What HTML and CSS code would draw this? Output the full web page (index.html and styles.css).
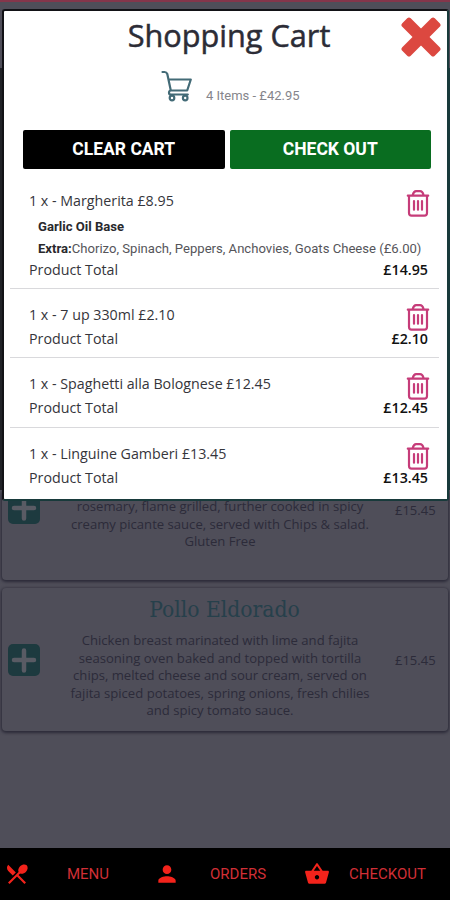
FILE: index.html
```html
<!DOCTYPE html>
<html lang="en">
<head>
    <meta charset="UTF-8">
    <meta name="viewport" content="width=device-width, initial-scale=1.0">
    <title>Shopping Cart</title>
    <link rel="stylesheet" href="styles.css">
</head>
<body>
    <svg width="0" height="0" class="icon-defs">
        <symbol id="trash" viewBox="0 0 24 28">
            <g fill="none" stroke="currentColor" stroke-width="2.2" stroke-linecap="round">
                <path d="M1.8 6.7h20.4M6.5 6.5C7.5 3.2 8.7 2.2 10 2.2h4c1.5 0 2.8 1 3.7 4.3M3 7v17a2.6 2.6 0 0 0 2.6 2.6h12.8a2.6 2.6 0 0 0 2.6-2.6v-17"/>
                <path d="M8 12v8.7M12 12v8.7M16 12v8.7"/>
            </g>
        </symbol>
        <symbol id="plus" viewBox="0 0 32 32">
            <rect width="32" height="32" rx="5" fill="#1d3a3f"/>
            <path d="M16 6.5v20M6 16h20" stroke="#595b64" stroke-width="4.5" stroke-linecap="round"/>
        </symbol>
    </svg>

    <div class="page">
        <div class="hero"></div>
        <div class="product first">
            <svg class="add"><use href="#plus"/></svg>
            <div class="details">
                <p>rosemary, flame grilled, further cooked in spicy<br>creamy picante sauce, served with Chips &amp; salad.<br>Gluten Free</p>
            </div>
            <span class="price">£15.45</span>
        </div>
        <div class="product">
            <svg class="add"><use href="#plus"/></svg>
            <div class="details">
                <h2>Pollo Eldorado</h2>
                <p>Chicken breast marinated with lime and fajita<br>seasoning oven baked and topped with tortilla<br>chips, melted cheese and sour cream, served on<br>fajita spiced potatoes, spring onions, fresh chilies<br>and spicy tomato sauce.</p>
            </div>
            <span class="price">£15.45</span>
        </div>
    </div>

    <!-- Cart popup -->
    <div class="cart">
        <svg class="close-btn" viewBox="0 0 40 40">
            <g fill="#dc4840" transform="rotate(45 20 20)">
                <rect x="-3" y="14" width="46" height="12" rx="2.5"/>
                <rect x="14" y="-3" width="12" height="46" rx="2.5"/>
            </g>
        </svg>
        <h1>Shopping Cart</h1>
        <div class="summary">
            <svg class="cart-icon" viewBox="0 0 32 32" fill="none" stroke="#436b77" stroke-width="2.2" stroke-linecap="round" stroke-linejoin="round">
                <path d="M1.5 2h2c1.6 0 2.3.7 2.8 2L9.8 20.5M7.8 9.5h22l-3.6 11H9.8c-2.4.4-2.4 4 0 4h17"/>
                <circle cx="11" cy="28" r="2.3"/>
                <circle cx="24.2" cy="28" r="2.3"/>
            </svg>
            <span>4 Items - £42.95</span>
        </div>
        <div class="actions">
            <button class="clear">CLEAR CART</button>
            <button class="checkout">CHECK OUT</button>
        </div>

        <div class="item">
            <div class="row name"><span>1 x - Margherita £8.95</span><svg class="trash"><use href="#trash"/></svg></div>
            <div class="option"><b>Garlic Oil Base</b></div>
            <div class="option extra"><b>Extra:</b>Chorizo, Spinach, Peppers, Anchovies, Goats Cheese (£6.00)</div>
            <div class="row total"><span>Product Total</span><span class="amount">£14.95</span></div>
        </div>
        <div class="item">
            <div class="row name"><span>1 x - 7 up 330ml £2.10</span><svg class="trash"><use href="#trash"/></svg></div>
            <div class="row total"><span>Product Total</span><span class="amount">£2.10</span></div>
        </div>
        <div class="item">
            <div class="row name"><span>1 x - Spaghetti alla Bolognese £12.45</span><svg class="trash"><use href="#trash"/></svg></div>
            <div class="row total"><span>Product Total</span><span class="amount">£12.45</span></div>
        </div>
        <div class="item">
            <div class="row name"><span>1 x - Linguine Gamberi £13.45</span><svg class="trash"><use href="#trash"/></svg></div>
            <div class="row total"><span>Product Total</span><span class="amount">£13.45</span></div>
        </div>
    </div>

    <nav>
        <a class="menu">
            <svg viewBox="0 0 24 24" fill="currentColor"><path d="M8.1 13.34l2.83-2.83L3.91 3.5a4.008 4.008 0 0 0 0 5.66l4.19 4.18zm6.78-1.81c1.53.71 3.68.21 5.27-1.38 1.91-1.91 2.28-4.65.81-6.12-1.46-1.46-4.2-1.1-6.12.81-1.59 1.59-2.09 3.74-1.38 5.27L3.7 19.87l1.41 1.41L12 14.41l6.88 6.88 1.41-1.41L13.41 13l1.47-1.47z"/></svg>
            <span>MENU</span>
        </a>
        <a class="orders">
            <svg viewBox="0 0 24 24" fill="currentColor"><path d="M12 12c2.21 0 4-1.79 4-4s-1.79-4-4-4-4 1.79-4 4 1.79 4 4 4zm0 2c-2.67 0-8 1.34-8 4v2h16v-2c0-2.66-5.33-4-8-4z"/></svg>
            <span>ORDERS</span>
        </a>
        <a class="pay">
            <svg viewBox="0 0 24 24" fill="currentColor"><path d="M17.21 9l-4.38-6.56a1 1 0 0 0-1.66.01L6.79 9H2c-.55 0-1 .45-1 1 0 .09.01.18.04.27l2.54 9.27c.23.84 1 1.46 1.92 1.46h13c.92 0 1.69-.62 1.93-1.46l2.54-9.27L23 10c0-.55-.45-1-1-1h-4.79zM9 9l3-4.4L15 9H9zm3 8c-1.1 0-2-.9-2-2s.9-2 2-2 2 .9 2 2-.9 2-2 2z"/></svg>
            <span>CHECKOUT</span>
        </a>
    </nav>
</body>
</html>
```

FILE: styles.css
```css
* {
    box-sizing: border-box;
}
body {
    margin: 0;
    height: 900px;
    display: flex;
    flex-direction: column;
    background-color: #4f4e59;
    font-family: "Open Sans", sans-serif;
    overflow: hidden;
}
h1, h2, p {
    margin: 0;
    font-weight: normal;
}
.icon-defs {
    position: absolute;
}
.page {
    flex: 1;
}

/* Menu behind the popup */
.hero {
    height: 490px;
    border-top: 2px solid #84364b;
    background: linear-gradient(#4f4e59 66px, transparent 66px), linear-gradient(90deg, #202126 50%, #183a3b 50%);
}
.product {
    display: grid;
    grid-template-columns: 62px 300px 1fr;
    align-items: center;
    height: 143px;
    margin: 0 2px;
    border-radius: 4px;
    color: #2c2b39;
    box-shadow: 0 1px 3px 1px #2b2a38;
    background-color: #4f4e59;
    margin-top: 8px;
    padding-left: 6px;
}
.product.first {
    height: 90px;
    margin-top: 0;
    padding-bottom: 51px;
}
.product.first .add {
    margin-top: -9px;
}
.add {
    width: 32px;
    height: 32px;
}
.details {
    text-align: center;
    white-space: nowrap;
}
.details h2 {
    font-family: "DejaVu Serif Condensed", "DejaVu Serif", serif;
    font-size: 22.6px;
    line-height: 28px;
    color: #26404b;
    padding-left: 9px;
    margin-bottom: 9px;
}
.details p {
    font-size: 13.1px;
    line-height: 17.5px;
    margin-bottom: 4px;
}
.product.first p {
    padding-top: 8px;
    margin-bottom: -15px;
}
.price {
    font-size: 13px;
    padding-left: 25px;
}
.product.first .price {
    margin-top: -6px;
}

/* Popup */
.cart {
    position: absolute;
    top: 9px;
    left: 2px;
    width: 447px;
    height: 492px;
    background-color: #fff;
    border: 2px solid #121216;
    border-right-color: #183a3b;
    border-bottom-color: #183a3b;
    border-radius: 3px;
    overflow: hidden;
    color: #35353b;
}
.close-btn {
    position: absolute;
    top: 6px;
    right: 6px;
    width: 40px;
    height: 40px;
}
.cart h1 {
    font-size: 30.7px;
    -webkit-text-stroke: 0.5px #2c2c36;
    line-height: 48px;
    text-align: center;
    color: #2c2c36;
    padding-left: 7px;
}
.summary {
    display: flex;
    height: 46px;
    margin-left: 157px;
    margin-top: 11px;
    font-family: Roboto, sans-serif;
    font-size: 13px;
    color: #85858b;
}
.cart-icon {
    width: 32px;
    height: 32px;
    margin-right: 13px;
}
.summary span {
    padding-top: 18px;
}
.actions {
    display: flex;
    gap: 5px;
    margin: 14px 16px 0 19px;
}
.actions button {
    flex: 1;
    height: 39px;
    padding: 0 0 2px;
    border: none;
    border-radius: 2px;
    color: white;
    font: bold 17.5px Roboto, sans-serif;
}
.clear {
    background-color: #000;
}
.checkout {
    background-color: #096d20;
}
.item {
    margin: 0 8px 0 6px;
    height: 69.5px;
    padding: 13px 11px 0 19px;
    border-bottom: 1px solid #d9d9dc;
    font-size: 14.25px;
    white-space: nowrap;
}
.actions + .item {
    height: 119.5px;
    padding-top: 19px;
}
.item:last-child {
    border-bottom: none;
}
.row {
    display: flex;
    justify-content: space-between;
}
.name {
    height: 25px;
    line-height: 25px;
}
.trash {
    width: 24px;
    height: 28px;
    margin-right: -2px;
    margin-top: 1px;
    color: #c63c79;
}
.option {
    padding-left: 9px;
    height: 22px;
    line-height: 27px;
    font-family: Roboto, sans-serif;
    font-size: 13.1px;
    color: #55555a;
}
.option b {
    color: #29292d;
}
.total {
    line-height: 24px;
}
.extra + .total {
    line-height: 26px;
}
.amount {
    color: #111;
    font-weight: 600;
}

/* Bottom bar */
nav {
    display: flex;
    align-items: center;
    height: 52px;
    background-color: #000;
    color: #f3231b;
    font-family: Roboto, sans-serif;
    font-size: 15px;
}
nav a {
    display: flex;
    align-items: center;
}
nav span {
    color: #d12f36;
}
nav .menu {
    width: 150px;
    padding-left: 4px;
}
nav .menu svg {
    margin-right: 37px;
}
nav svg {
    width: 26px;
    height: 26px;
}
nav .orders {
    width: 154px;
    padding-left: 4px;
}
nav .orders svg {
    margin-right: 30px;
}
nav .pay svg {
    margin-right: 19px;
}
```
